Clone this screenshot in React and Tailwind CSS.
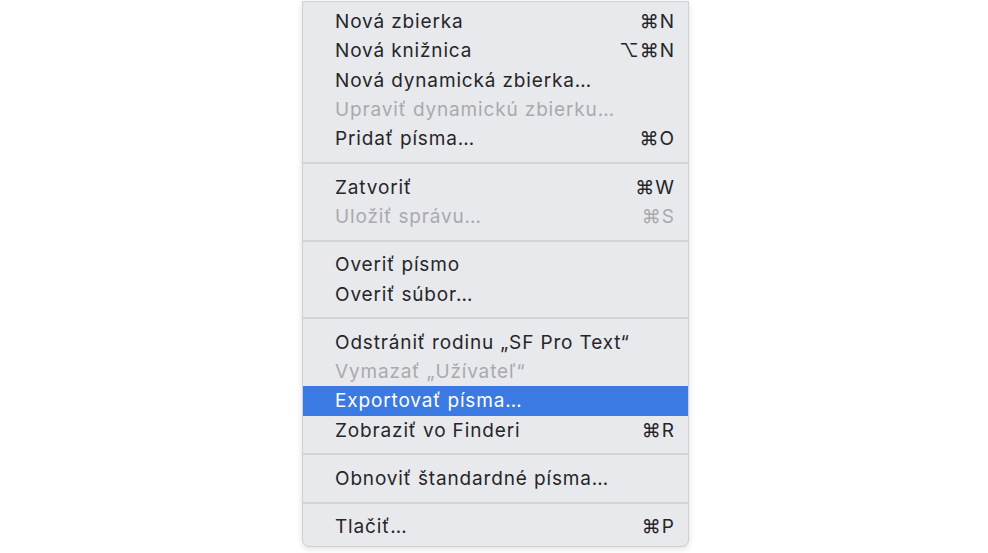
import React from 'react';

const sections = [
  [
    { label: 'Nová zbierka', shortcut: '⌘N' },
    { label: 'Nová knižnica', shortcut: '⌥⌘N' },
    { label: 'Nová dynamická zbierka…' },
    { label: 'Upraviť dynamickú zbierku…', disabled: true },
    { label: 'Pridať písma…', shortcut: '⌘O' },
  ],
  [
    { label: 'Zatvoriť', shortcut: '⌘W' },
    { label: 'Uložiť správu…', shortcut: '⌘S', disabled: true },
  ],
  [
    { label: 'Overiť písmo' },
    { label: 'Overiť súbor…' },
  ],
  [
    { label: 'Odstrániť rodinu „SF Pro Text“' },
    { label: 'Vymazať „Užívateľ“', disabled: true },
    { label: 'Exportovať písma…', active: true },
    { label: 'Zobraziť vo Finderi', shortcut: '⌘R' },
  ],
  [
    { label: 'Obnoviť štandardné písma…' },
  ],
  [
    { label: 'Tlačiť…', shortcut: '⌘P' },
  ],
];

const MenuItem = ({ item }) => {
  let color = 'text-[#262628]';
  if (item.disabled) color = 'text-[#a9aaae]';
  if (item.active) color = 'text-white';

  return (
    <div
      className={`h-[29.3px] flex items-center justify-between pl-[32px] pr-[13px] ${
        item.active ? 'bg-[#3b7ae3]' : ''
      } ${color}`}
    >
      <span className="whitespace-nowrap tracking-[0.85px]">{item.label}</span>
      {item.shortcut && (
        <span className="whitespace-nowrap tracking-[1px]">{item.shortcut}</span>
      )}
    </div>
  );
};

export default function App() {
  return (
    <div className="w-[988px] h-[553px] bg-white overflow-hidden pt-[1px] pl-[302px]">
      <div
        className="w-[387px] h-[546px] bg-[#e8e9ed] border border-[#cfd0d3] rounded-b-[7px] shadow-[0_2px_6px_rgba(0,0,0,0.12)] py-[5px] text-[19px] leading-none"
        style={{ fontFamily: 'Inter, "DejaVu Sans", sans-serif' }}
      >
        {sections.map((section, i) => (
          <div key={i}>
            {i > 0 && (
              <div className="h-[19px] flex items-center">
                <div className="w-full h-[2px] bg-[#d3d4d8]" />
              </div>
            )}
            {section.map((item, j) => (
              <MenuItem key={j} item={item} />
            ))}
          </div>
        ))}
      </div>
    </div>
  );
}
